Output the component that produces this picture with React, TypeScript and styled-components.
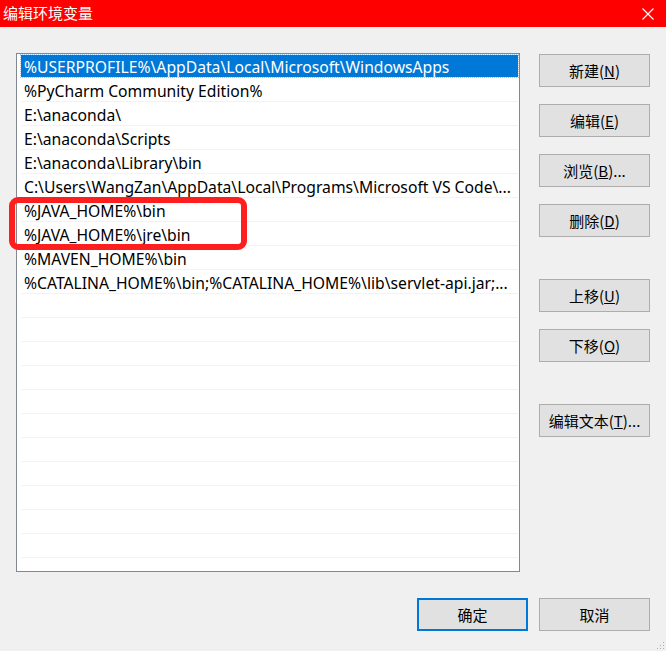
import React from "react";
import styled, { createGlobalStyle } from "styled-components";

const Global = createGlobalStyle`
  html, body { margin: 0; padding: 0; background: #f0f0f0; }
  body { font-family: "Noto Sans", "Noto Sans CJK SC", sans-serif; }
`;

const Window = styled.div`
  position: relative;
  width: 666px;
  height: 651px;
  background: #f0f0f0;
  display: flex;
  flex-direction: column;
  overflow: hidden;
`;

const TitleBar = styled.div`
  height: 27px;
  background: #ff0000;
  display: flex;
  align-items: center;
  justify-content: space-between;
  padding: 0 12px 0 3px;
  color: #ffffff;
  font-family: "Noto Sans CJK SC", sans-serif;
  font-size: 15px;
  flex-shrink: 0;
`;

const Title = styled.span`
  line-height: 27px;
  margin-top: -2px;
`;

const Body = styled.div`
  display: grid;
  grid-template-columns: 504px 111px;
  column-gap: 19px;
  padding: 26px 0 0 16px;
`;

const ListWrap = styled.div`
  position: relative;
`;

const ListBox = styled.div`
  border: 1px solid #828790;
  background: #ffffff;
  padding: 0 1px 0 4px;
  box-sizing: border-box;
  height: 519px;
  overflow: hidden;
`;

const Row = styled.div`
  height: 24px;
  box-sizing: border-box;
  border-bottom: 1px solid #f3f3f3;
  padding: 1px 0 0 0;
  font-family: "Noto Sans", "Noto Sans CJK SC", sans-serif;
  font-size: 15.7px;
`;

const RowInner = styled.div<{ $selected?: boolean }>`
  height: 22px;
  line-height: 25px;
  padding-left: 3px;
  white-space: nowrap;
  overflow: hidden;
  color: ${(p) => (p.$selected ? "#ffffff" : "#000000")};
  background: ${(p) => (p.$selected ? "#0078d7" : "transparent")};
  outline: ${(p) => (p.$selected ? "1px dotted #99c9ef" : "none")};
`;

const Highlight = styled.div`
  position: absolute;
  left: -7px;
  top: 144px;
  width: 238px;
  height: 53px;
  border: 6px solid #ff1e1e;
  border-radius: 9px;
  box-sizing: border-box;
  pointer-events: none;
`;

const Side = styled.div`
  display: flex;
  flex-direction: column;
  padding-top: 1px;
`;

const Button = styled.button<{ $gapTop?: number; $default?: boolean }>`
  width: 111px;
  height: 33px;
  margin-top: ${(p) => p.$gapTop ?? 0}px;
  background: #e1e1e1;
  border: ${(p) => (p.$default ? "2px solid #0078d7" : "1px solid #adadad")};
  box-sizing: border-box;
  font-family: "Noto Sans CJK SC", sans-serif;
  font-size: 15px;
  color: #000000;
  padding: 0;
  display: flex;
  align-items: center;
  justify-content: center;
`;

const Footer = styled.div`
  display: flex;
  justify-content: flex-end;
  gap: 11px;
  padding: 26px 16px 0 0;
`;

const Grip = styled.svg`
  position: absolute;
  right: 1px;
  bottom: 1px;
`;

const items = [
  "%USERPROFILE%\\AppData\\Local\\Microsoft\\WindowsApps",
  "%PyCharm Community Edition%",
  "E:\\anaconda\\",
  "E:\\anaconda\\Scripts",
  "E:\\anaconda\\Library\\bin",
  "C:\\Users\\WangZan\\AppData\\Local\\Programs\\Microsoft VS Code\\...",
  "%JAVA_HOME%\\bin",
  "%JAVA_HOME%\\jre\\bin",
  "%MAVEN_HOME%\\bin",
  "%CATALINA_HOME%\\bin;%CATALINA_HOME%\\lib\\servlet-api.jar;...",
];

const TOTAL_ROWS = 22;

export default function App() {
  const rows = Array.from({ length: TOTAL_ROWS }, (_, i) => items[i] ?? "");
  return (
    <>
      <Global />
      <Window>
        <TitleBar>
          <Title>编辑环境变量</Title>
          <svg width="12" height="12" viewBox="0 0 12 12">
            <path d="M0.5 0.5 L11.5 11.5 M11.5 0.5 L0.5 11.5" stroke="#fff" strokeWidth="1.1" />
          </svg>
        </TitleBar>
        <Body>
          <ListWrap>
            <ListBox>
              {rows.map((t, i) => (
                <Row key={i}>
                  <RowInner $selected={i === 0}>{t}</RowInner>
                </Row>
              ))}
            </ListBox>
            <Highlight />
          </ListWrap>
          <Side>
            <Button>新建(<u>N</u>)</Button>
            <Button $gapTop={17}>编辑(<u>E</u>)</Button>
            <Button $gapTop={17}>浏览(<u>B</u>)...</Button>
            <Button $gapTop={17}>删除(<u>D</u>)</Button>
            <Button $gapTop={42}>上移(<u>U</u>)</Button>
            <Button $gapTop={17}>下移(<u>O</u>)</Button>
            <Button $gapTop={42}>编辑文本(<u>T</u>)...</Button>
          </Side>
        </Body>
        <Footer>
          <Button $default>确定</Button>
          <Button>取消</Button>
        </Footer>
        <Grip width="8" height="8" viewBox="0 0 8 8">
          <rect x="6" y="0" width="1" height="1" fill="#b0b0b0" />
          <rect x="3" y="3" width="1" height="1" fill="#b0b0b0" />
          <rect x="6" y="3" width="1" height="1" fill="#b0b0b0" />
          <rect x="0" y="6" width="1" height="1" fill="#b0b0b0" />
          <rect x="3" y="6" width="1" height="1" fill="#b0b0b0" />
          <rect x="6" y="6" width="1" height="1" fill="#b0b0b0" />
        </Grip>
      </Window>
    </>
  );
}
